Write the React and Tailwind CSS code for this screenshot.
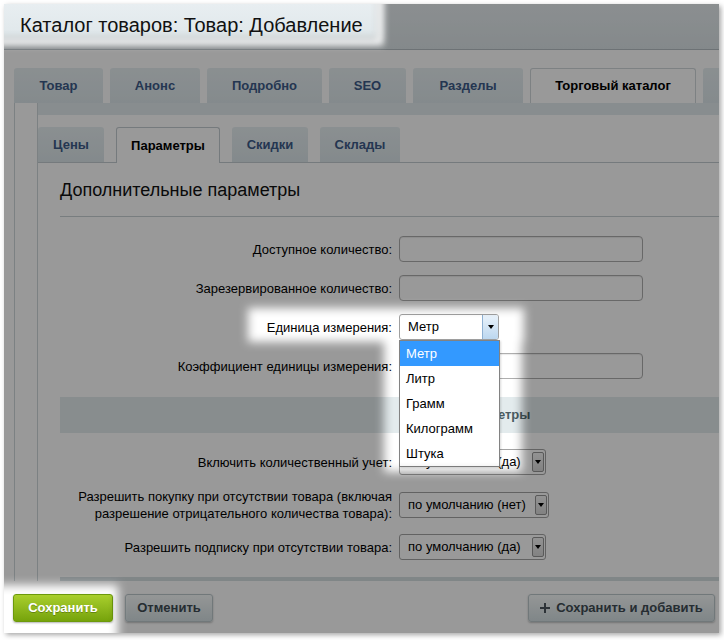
import React from 'react';

const tabs = [
  { label: 'Товар', w: 'w-[89px]' },
  { label: 'Анонс', w: 'w-[90px]' },
  { label: 'Подробно', w: 'w-[115px]' },
  { label: 'SEO', w: 'w-[77px]' },
  { label: 'Разделы', w: 'w-[110px]' },
  { label: 'Торговый каталог', w: 'w-[166px]', active: true },
  { label: '', w: 'w-[30px]' },
];

const subTabs = [
  { label: 'Цены', w: 'w-[66px]' },
  { label: 'Параметры', w: 'w-[104px]', active: true },
  { label: 'Скидки', w: 'w-[76px]' },
  { label: 'Склады', w: 'w-[80px]' },
];

const units = ['Метр', 'Литр', 'Грамм', 'Килограмм', 'Штука'];

const Arrow = () => (
  <span className="h-0 w-0 border-x-[3.5px] border-t-[4px] border-x-transparent border-t-black" />
);

const Row = ({ label, children }) => (
  <div className="flex items-center">
    <div className="w-[332px] text-right text-[13px] leading-[17px] text-black">{label}</div>
    <div className="ml-[7px]">{children}</div>
  </div>
);

const TextInput = () => (
  <div className="h-[26px] w-[244px] rounded-[4px] border border-[#aeaeae] bg-white shadow-[inset_0_1px_1px_rgba(0,0,0,0.08)]" />
);

const Select = ({ value, width }) => (
  <div className={`flex h-[26px] items-center rounded-[3px] border border-[#a3a3a3] bg-white text-[13px] text-black ${width}`}>
    <span className="flex-1 pl-[8px]">{value}</span>
    <span className="my-[2px] mr-[1px] flex w-[12px] items-center justify-center self-stretch rounded-[2px] border border-[#949494] bg-gradient-to-b from-[#f5f5f5] to-[#d9d9d9]">
      <Arrow />
    </span>
  </div>
);

const UnitSelect = () => (
  <div className="relative flex h-[26px] w-[100px] items-center rounded-[3px] border border-[#a0a0a0] bg-white text-[13px] text-black">
    <span className="flex-1 pl-[8px]">Метр</span>
    <span className="flex w-[16px] items-center justify-center self-stretch rounded-r-[2px] border-l border-[#8fb1d3] bg-gradient-to-b from-[#eaf3fb] to-[#bcd7ef]">
      <Arrow />
    </span>
    <div className="absolute left-[-1px] top-[25px] z-10 w-[101px] border border-[#828282] bg-white shadow-[1px_1px_2px_rgba(0,0,0,0.15)]">
      {units.map((u, i) => (
        <div
          key={u}
          className={`flex h-[25px] items-center pl-[6px] ${i === 0 ? 'bg-[#3399ff] text-white' : 'text-black'}`}
        >
          {u}
        </div>
      ))}
    </div>
  </div>
);

const Spotlight = () => (
  <svg className="pointer-events-none absolute left-0 top-0 z-20" width="715" height="629">
    <defs>
      <filter id="soft" filterUnits="userSpaceOnUse" x="-60" y="-60" width="835" height="750">
        <feGaussianBlur stdDeviation="5" />
      </filter>
      <filter id="halo" filterUnits="userSpaceOnUse" x="-60" y="-60" width="835" height="750">
        <feGaussianBlur stdDeviation="3" />
      </filter>
      <mask id="spot" maskUnits="userSpaceOnUse" x="0" y="0" width="715" height="629">
        <rect width="715" height="629" fill="white" />
        <g filter="url(#soft)" fill="black">
          <rect x="-30" y="-30" width="406" height="66" />
          <rect x="244" y="304" width="276" height="34" />
          <rect x="380" y="332" width="138" height="136" />
          <rect x="-24" y="581" width="138" height="70" />
        </g>
      </mask>
    </defs>
    <rect width="715" height="629" fill="black" fillOpacity="0.4" mask="url(#spot)" />
    <rect
      x="-30"
      y="-30"
      width="406"
      height="68"
      fill="none"
      stroke="white"
      strokeWidth="7"
      opacity="0.85"
      filter="url(#halo)"
    />
  </svg>
);

export default function App() {
  return (
    <div className="h-[640px] w-[724px] bg-white pl-[4px] pt-[4px] font-['Liberation_Sans',Arial,sans-serif]">
      <div className="relative h-[629px] w-[715px] overflow-hidden bg-white shadow-[2px_2px_5px_rgba(0,0,0,0.35)]">
        {/* title */}
        <div className="flex h-[46px] items-start border-b border-[#b6bfc3] bg-gradient-to-b from-[#e8eef1] to-[#dde5e8] pl-[16px] pt-[10px]">
          <h1 className="text-[20px] leading-[23px] text-[#111]">Каталог товаров: Товар: Добавление</h1>
        </div>

        {/* main tabs */}
        <div className="mt-[18px] flex h-[35px] gap-[7px] pl-[10px]">
          {tabs.map((t, i) => (
            <div
              key={i}
              className={`flex shrink-0 items-center justify-center rounded-t-[3px] text-[13px] font-bold ${t.w} ${
                t.active
                  ? 'border border-b-0 border-[#d0d8db] bg-white text-black'
                  : 'bg-gradient-to-b from-[#e7eff2] to-[#dde7eb] text-[#3c5a88]'
              }`}
            >
              {t.label}
            </div>
          ))}
        </div>

        <div className="ml-[10px] flex">
          <div className="h-[478px] w-[24px] shrink-0 border-x border-[#cfd8db] bg-white" />
          <div className="flex-1">
            <div className="h-[12px] bg-[#e3ebee]" />
            <div className="mt-[12px] flex h-[35px] gap-[12px]">
              {subTabs.map((t) => (
                <div
                  key={t.label}
                  className={`relative flex shrink-0 items-center justify-center rounded-t-[3px] text-[13px] font-bold ${t.w} ${
                    t.active
                      ? 'z-10 mb-[-1px] h-[36px] border border-b-0 border-[#c3ccd0] bg-white text-black'
                      : 'bg-gradient-to-b from-[#e7eff2] to-[#dce6ea] text-[#3c5a88]'
                  }`}
                >
                  {t.label}
                </div>
              ))}
            </div>

            <div className="border-t border-[#c3ccd0] pl-[22px]">
              <div className="border-b border-[#c9d1d4] pb-[15px] pt-[16px]">
                <h2 className="text-[18px] leading-[22px] text-[#111]">Дополнительные параметры</h2>
              </div>

              <div className="mt-[19px] flex flex-col gap-[13px]">
                <Row label="Доступное количество:">
                  <TextInput />
                </Row>
                <Row label="Зарезервированное количество:">
                  <TextInput />
                </Row>
                <Row label="Единица измерения:">
                  <UnitSelect />
                </Row>
                <Row label="Коэффициент единицы измерения:">
                  <TextInput />
                </Row>
              </div>

              <div className="mt-[18px] flex h-[36px] items-center justify-center bg-[#e3ebed] pl-[208px] text-[13px] font-bold text-[#4a5c62]">
                Параметры
              </div>

              <div className="mt-[16px] flex flex-col">
                <Row label="Включить количественный учет:">
                  <Select value="по умолчанию (да)" width="w-[147px]" />
                </Row>
                <div className="mt-[13px]">
                  <Row
                    label={
                      <>
                        Разрешить покупку при отсутствии товара (включая
                        <br />
                        разрешение отрицательного количества товара):
                      </>
                    }
                  >
                    <Select value="по умолчанию (нет)" width="w-[150px]" />
                  </Row>
                </div>
                <div className="mt-[12px]">
                  <Row label="Разрешить подписку при отсутствии товара:">
                    <Select value="по умолчанию (да)" width="w-[147px]" />
                  </Row>
                </div>
              </div>

              <div className="mt-[17px] h-[4px] bg-[#d6dfe2]" />
            </div>
          </div>
        </div>

        {/* footer */}
        <div className="flex items-start pl-[9px] pr-[4px] pt-[13px]">
          <button className="h-[28px] w-[100px] rounded-[3px] border border-[#6d9a0c] bg-gradient-to-b from-[#a9cf2c] to-[#76a30a] text-[13px] font-bold text-white shadow-[0_1px_2px_rgba(0,0,0,0.3)] [text-shadow:0_1px_0_rgba(0,0,0,0.25)]">
            Сохранить
          </button>
          <button className="ml-[12px] h-[28px] w-[88px] rounded-[3px] border border-[#bcc8cc] bg-gradient-to-b from-[#f8fbfb] to-[#d5e0e3] text-[13px] font-bold text-[#3f4b54] shadow-[0_1px_2px_rgba(0,0,0,0.25)]">
            Отменить
          </button>
          <button className="ml-auto flex h-[28px] w-[187px] items-center justify-center gap-[6px] rounded-[3px] border border-[#bcc8cc] bg-gradient-to-b from-[#f8fbfb] to-[#d5e0e3] text-[13px] font-bold text-[#3f4b54] shadow-[0_1px_2px_rgba(0,0,0,0.25)]">
            <svg width="10" height="10" viewBox="0 0 10 10">
              <path d="M4 0h2v4h4v2H6v4H4V6H0V4h4z" fill="#4b565e" />
            </svg>
            Сохранить и добавить
          </button>
        </div>

        <Spotlight />
      </div>
    </div>
  );
}
